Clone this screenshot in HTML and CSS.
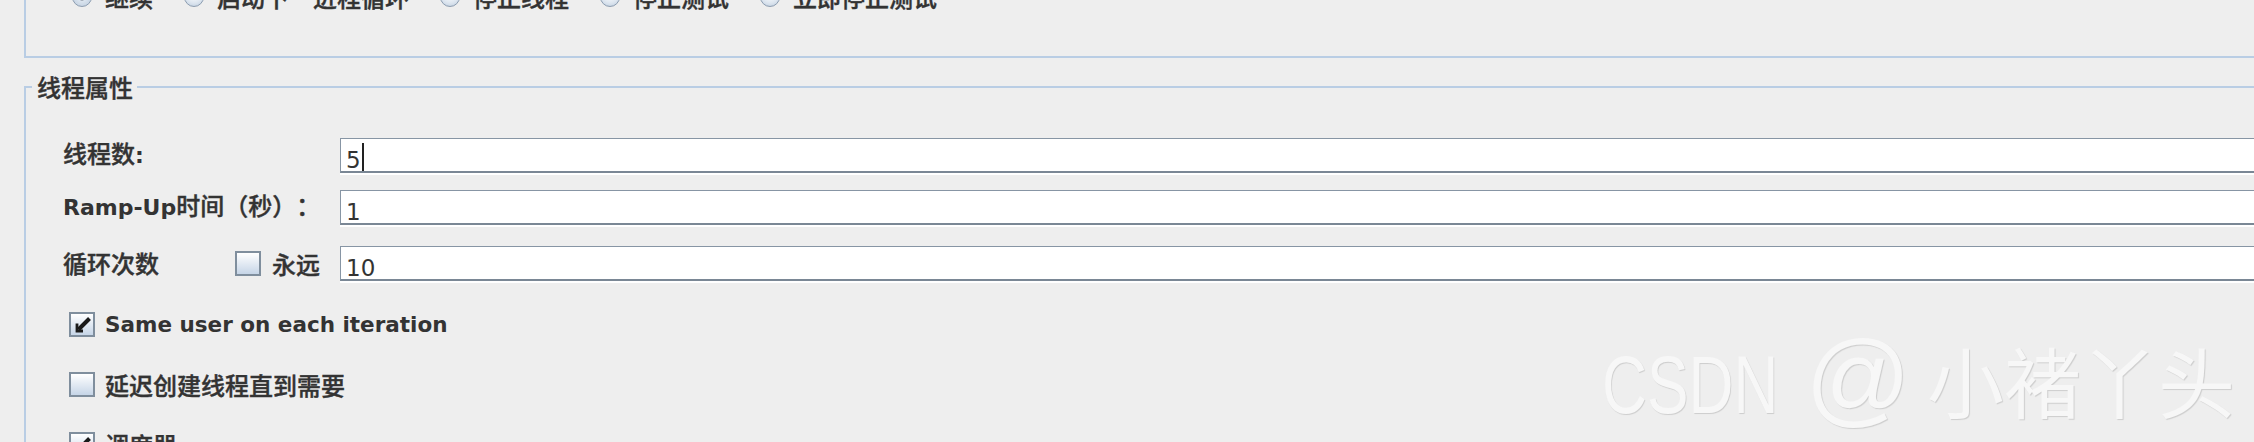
FILE: index.html
```html
<!DOCTYPE html>
<html lang="zh-CN">
<head>
<meta charset="utf-8">
<title>线程组</title>
<link rel="stylesheet" href="styles.css">
</head>
<body>
<div class="panel">
  <div class="action-group">
    <div class="radio-row">
      <label class="radio"><span class="radio-dot selected"></span>继续</label>
      <label class="radio"><span class="radio-dot"></span>启动下一进程循环</label>
      <label class="radio"><span class="radio-dot"></span>停止线程</label>
      <label class="radio"><span class="radio-dot"></span>停止测试</label>
      <label class="radio"><span class="radio-dot"></span>立即停止测试</label>
    </div>
  </div>

  <fieldset class="thread-group">
    <legend>线程属性</legend>
    <div class="form">
      <div class="form-row">
        <div class="label wide">线程数<span class="latin">:</span></div>
        <div class="field"><span class="value">5</span><span class="caret"></span></div>
      </div>
      <div class="form-row">
        <div class="label wide"><span class="latin">Ramp-Up</span>时间（秒）：</div>
        <div class="field"><span class="value">1</span></div>
      </div>
      <div class="form-row loop">
        <div class="label">循环次数</div>
        <label class="check inline"><span class="box"></span>永远</label>
        <div class="field"><span class="value">10</span></div>
      </div>
    </div>

    <div class="check-list">
      <label class="check"><span class="box checked"><svg viewBox="0 0 21 21" width="21" height="21"><path d="M17.5 4.5 L6.5 15.5" stroke="#1a1a1a" stroke-width="4" stroke-linecap="butt"/><path d="M5 9.5 V17 H11" fill="none" stroke="#1a1a1a" stroke-width="2.8"/></svg></span><span class="latin small">Same user on each iteration</span></label>
      <label class="check"><span class="box"></span>延迟创建线程直到需要</label>
      <label class="check"><span class="box checked"><svg viewBox="0 0 21 21" width="21" height="21"><path d="M17.5 4.5 L6.5 15.5" stroke="#1a1a1a" stroke-width="4" stroke-linecap="butt"/><path d="M5 9.5 V17 H11" fill="none" stroke="#1a1a1a" stroke-width="2.8"/></svg></span>调度器</label>
    </div>
  </fieldset>

  <div class="watermark"><span class="wm-latin">CSDN</span><span class="wm-at">@</span><span class="wm-name">小褚丫头</span></div>
</div>
</body>
</html>
```

FILE: styles.css
```css
* {
  box-sizing: border-box;
}

html,
body {
  margin: 0;
  padding: 0;
}

body {
  background: #eeeeee;
  color: #333333;
  font-family: "DejaVu Sans", "Noto Sans CJK SC", sans-serif;
  text-spacing-trim: space-all;
}

.panel {
  position: relative;
  width: 2254px;
  height: 442px;
  overflow: hidden;
}

/* top group (action after sampler error) */
.action-group {
  display: flow-root;
  margin-left: 24px;
  height: 58px;
  border-left: 2px solid #b9cde4;
  border-bottom: 2px solid #b9cde4;
}

.radio-row {
  display: flex;
  align-items: center;
  height: 28px;
  margin-top: -17px;
  padding-left: 46px;
  font-family: "Noto Sans CJK SC", sans-serif;
  font-size: 24px;
  font-weight: 500;
  line-height: 28px;
  -webkit-text-stroke: 0.4px currentColor;
}

.radio {
  display: flex;
  align-items: center;
  gap: 13px;
  margin-right: 31px;
}

.radio-dot {
  width: 20px;
  height: 20px;
  border-radius: 50%;
  border: 1px solid #8d9db0;
  background: radial-gradient(circle at 50% 35%, #ffffff 0%, #dce5ef 60%, #b9c9db 100%);
}

.radio-dot.selected {
  background: radial-gradient(circle, #6d7784 0 3px, #dce5ef 4px, #b9c9db 100%);
}

/* thread properties group */
.thread-group {
  margin: 15px -40px 0 24px;
  padding: 0;
  border: 2px solid #b9cde4;
  min-width: 0;
}

.thread-group legend {
  margin-left: 6px;
  padding: 0 4px 0 5px;
  font-family: "Noto Sans CJK SC", sans-serif;
  font-size: 24px;
  font-weight: 500;
  line-height: 28px;
  color: #333333;
  -webkit-text-stroke: 0.4px currentColor;
}

.form {
  padding: 20px 0 0 37px;
}

.form-row {
  display: flex;
  align-items: center;
  height: 35px;
  margin-top: 17px;
}

.form-row.loop {
  margin-top: 21px;
}

.label {
  width: 172px;
  padding-bottom: 2px;
  font-family: "Noto Sans CJK SC", sans-serif;
  font-size: 24px;
  font-weight: 500;
  line-height: 28px;
  white-space: nowrap;
  -webkit-text-stroke: 0.4px currentColor;
}

.label.wide {
  width: 277px;
}

.latin {
  font-family: "DejaVu Sans", sans-serif;
  font-size: 22px;
  font-weight: bold;
  -webkit-text-stroke: 0;
}

.latin.small {
  font-size: 21.5px;
}

.field {
  display: flex;
  align-items: flex-start;
  flex: 1;
  height: 35px;
  padding: 7px 0 0 5px;
  background: #ffffff;
  border-top: 1px solid #8795a4;
  border-left: 1px solid #8795a4;
  border-bottom: 2px solid #7a8795;
  box-shadow: 0 2px 0 #ffffff;
  font-family: "DejaVu Sans", sans-serif;
  font-size: 23px;
  line-height: 28px;
  color: #333333;
}

.caret {
  width: 2px;
  height: 28px;
  margin-top: -3px;
  margin-left: 1px;
  background: #222222;
}

/* checkboxes */
.check {
  display: flex;
  align-items: center;
  gap: 10px;
  font-family: "Noto Sans CJK SC", sans-serif;
  font-size: 24px;
  font-weight: 500;
  line-height: 28px;
  white-space: nowrap;
  -webkit-text-stroke: 0.4px currentColor;
}

.check.inline {
  width: 105px;
  gap: 11px;
}

.box {
  display: flex;
  align-items: center;
  justify-content: center;
  flex: none;
  width: 26px;
  height: 25px;
  border: 2px solid #7f8e9d;
  background: linear-gradient(#ffffff, #c6d5e7);
}

.check-list {
  display: flex;
  flex-direction: column;
  gap: 35px;
  padding: 31px 0 0 43px;
}

.check-list .check {
  height: 25px;
}

/* watermark overlay */
.watermark {
  position: absolute;
  left: 1602px;
  top: 335px;
  font-family: "Liberation Sans", "Noto Sans CJK SC", sans-serif;
  font-size: 82px;
  line-height: 100px;
  color: #f7f7f7;
  text-shadow: 1px 1px 1px rgba(0, 0, 0, 0.14);
  white-space: nowrap;
}

.wm-latin {
  display: inline-block;
  transform: scaleX(0.76);
  transform-origin: left center;
  margin-right: -56px;
}

.wm-at {
  margin-left: 27px;
  font-size: 104px;
  line-height: 80px;
}

.wm-name {
  margin-left: 16px;
  font-size: 77px;
}
```
